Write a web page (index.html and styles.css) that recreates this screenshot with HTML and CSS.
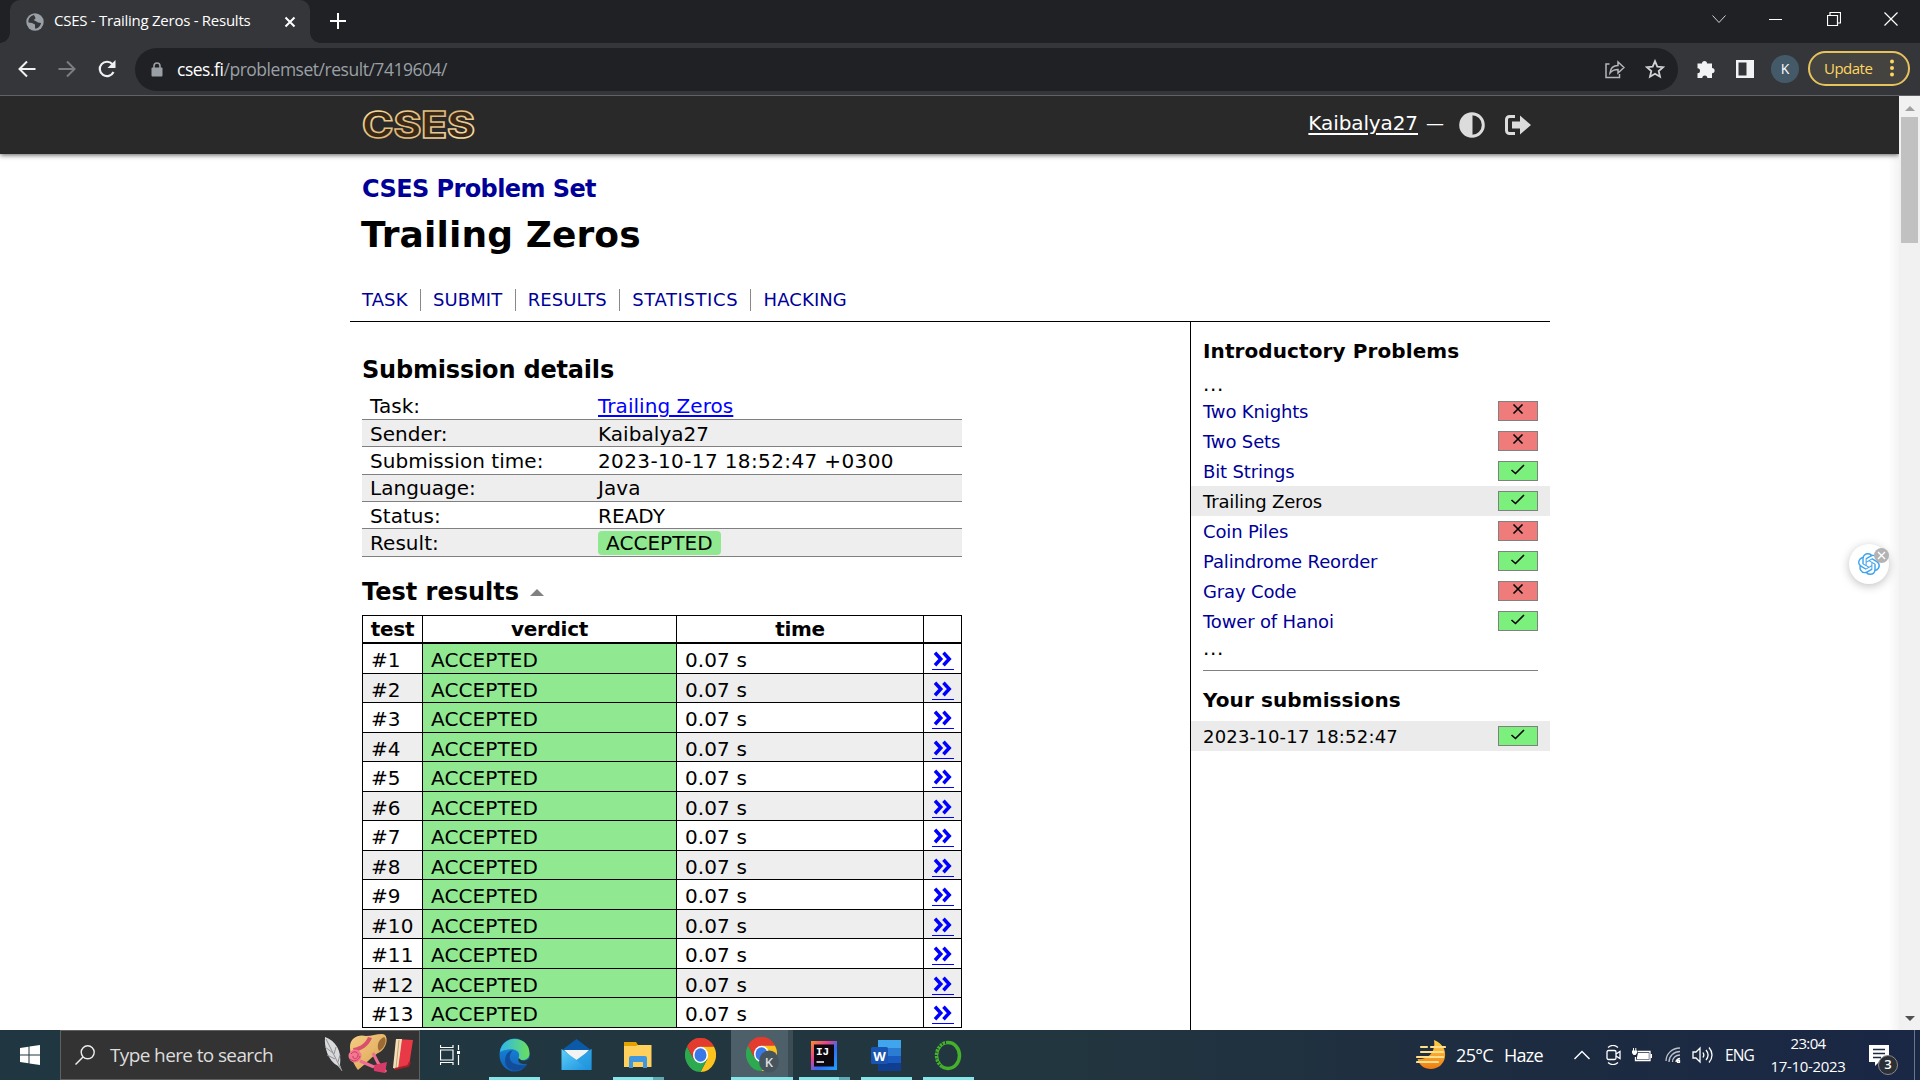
FILE: index.html
```
<!DOCTYPE html>
<html lang="en">
<head>
<meta charset="utf-8">
<title>CSES - Trailing Zeros - Results</title>
<link rel="stylesheet" href="styles.css">
</head>
<body>
<svg class="defs" width="0" height="0" aria-hidden="true">
  <defs>
    <linearGradient id="gold" x1="0" y1="0" x2="1" y2="1"><stop offset="0" stop-color="#ffe7a8"/><stop offset=".5" stop-color="#dcb878"/><stop offset="1" stop-color="#ffedc0"/></linearGradient>
    <linearGradient id="edgeA" x1="0" y1="0" x2="1" y2="0"><stop offset="0" stop-color="#2db5f0"/><stop offset="1" stop-color="#6be05a"/></linearGradient>
    <linearGradient id="edgeB" x1="0" y1="0" x2="0" y2="1"><stop offset="0" stop-color="#1a8ee0"/><stop offset="1" stop-color="#1160b8"/></linearGradient>
    <linearGradient id="mailA" x1="0" y1="0" x2="1" y2="1"><stop offset="0" stop-color="#5ed1fb"/><stop offset="1" stop-color="#1b8fdc"/></linearGradient>
    <linearGradient id="straw" x1="0" y1="0" x2="1" y2="1"><stop offset="0" stop-color="#f6cf86"/><stop offset="1" stop-color="#d9a050"/></linearGradient>
    <linearGradient id="ij" x1="0" y1="0" x2="1" y2="1"><stop offset="0" stop-color="#ff8a2a"/><stop offset=".35" stop-color="#e8408f"/><stop offset=".6" stop-color="#2f6df6"/><stop offset="1" stop-color="#1fa2ff"/></linearGradient>
    <linearGradient id="haze" x1="0" y1="0" x2="0" y2="1"><stop offset="0" stop-color="#ffd24a"/><stop offset="1" stop-color="#f07a13"/></linearGradient>
    <symbol id="more" viewBox="0 0 22 18"><path d="M2 2 8.500 9 2 16M11.500 2l6.500 7-6.500 7" fill="none" stroke="#00f" stroke-width="3.900"/></symbol>
    <symbol id="yes" viewBox="0 0 16 14"><path d="M1.500 8 5.500 11.500 14 3" fill="none" stroke="#000" stroke-width="1.600"/></symbol>
    <symbol id="no" viewBox="0 0 16 14"><path d="M3.500 2.500l9 9M12.500 2.500l-9 9" fill="none" stroke="#000" stroke-width="1.600"/></symbol>
    <symbol id="chrome" viewBox="0 0 32 34" preserveAspectRatio="none">
      <path d="M16 17 2.140 8.500A16 17 0 0 1 29.860 8.500L16 8.500Z" fill="#e33b2e"/>
      <path d="M16 8.500H29.860A16 17 0 0 1 16 34L23 21Z" fill="#fcc31e"/>
      <path d="M2.140 8.500A16 17 0 0 0 16 34L23 21 16 17 9 21Z" fill="#2da94f"/>
      <path d="M2.140 8.500 9 21l7-4V8.500H29.860A16 17 0 0 0 2.140 8.500Z" fill="#e33b2e"/>
      <ellipse cx="16" cy="17" rx="7.800" ry="8.300" fill="#fff"/><ellipse cx="16" cy="17" rx="6.200" ry="6.700" fill="#3b78e7"/>
    </symbol>
  </defs>
</svg>

<div class="tabstrip">
  <div class="tab">
    <svg class="favicon" width="18" height="18" viewBox="0 0 18 18"><circle cx="9" cy="9" r="8.700" fill="#9aa0a6"/><path d="M8 2C4 3 2 6 2.500 9.500L6 10l3 1.500v4c2 .5 5.500-2 6-5.500L12 9.500 9.500 8 7.500 7 10 5.500 9 4Z" fill="#35363a"/><path d="M10 3.500 14 5l-2 3-3-1.500Z" fill="#9aa0a6"/></svg>
    <span class="tab-title">CSES - Trailing Zeros - Results</span>
    <svg width="12" height="12" viewBox="0 0 12 12"><path d="M1.500 1.500l9 9M10.500 1.500l-9 9" stroke="#fff" stroke-width="2"/></svg>
  </div>
  <svg class="newtab" width="16" height="16" viewBox="0 0 16 16"><path d="M8 0v16M0 8h16" stroke="#fff" stroke-width="2"/></svg>
  <div class="winbtns">
    <svg width="14" height="14" viewBox="0 0 14 14"><path d="M.5 3.500 7 10.500l6.500-7" fill="none" stroke="#d5d5d5"/></svg>
    <svg width="14" height="14" viewBox="0 0 14 14"><path d="M0 7.500h13" stroke="#fff"/></svg>
    <svg width="14" height="14" viewBox="0 0 14 14"><path d="M.5 3.500h10v10H.5zM3 3V.5h10.500V11H11" fill="none" stroke="#fff" stroke-width="1.200"/></svg>
    <svg width="14" height="14" viewBox="0 0 14 14"><path d="M.5.5l13 13M13.500.5l-13 13" stroke="#fff" stroke-width="1.200"/></svg>
  </div>
</div>

<div class="toolbar">
  <svg class="nav-btn" width="18" height="18" viewBox="0 0 18 18"><path d="M17.500 9H2M9 1.500 1.500 9 9 16.500" fill="none" stroke="#f1f1f1" stroke-width="2"/></svg>
  <svg class="nav-btn" width="18" height="18" viewBox="0 0 18 18"><path d="M.5 9H16M9 1.500 16.500 9 9 16.500" fill="none" stroke="#7c7d80" stroke-width="2"/></svg>
  <svg class="nav-btn" width="18" height="18" viewBox="0 0 18 18"><path d="M15.500 12A7.200 7.200 0 1 1 14.500 4.300" fill="none" stroke="#f1f1f1" stroke-width="2.200"/><path d="M17.500 0v8h-8Z" fill="#f1f1f1"/></svg>
  <div class="omnibox">
    <svg width="12" height="15" viewBox="0 0 12 15"><path d="M3 6V4a3 3 0 0 1 6 0v2" fill="none" stroke="#9aa0a6" stroke-width="1.600"/><rect x=".5" y="5.500" width="11" height="9" rx="1" fill="#9aa0a6"/></svg>
    <span class="url"><b>cses.fi</b>/problemset/result/7419604/</span>
    <svg class="share" width="20" height="20" viewBox="0 0 20 20"><path d="M4.500 5H1v13.500h13.500V15M5 14c.5-5 3.500-7.500 8-7.500V3l6 5.500-6 5.500v-3.500c-4 0-6 1-8 3.500Z" fill="none" stroke="#b4b6b9" stroke-width="1.500"/></svg>
    <svg width="20" height="20" viewBox="0 0 20 20"><path d="M10 2.200l2.300 5.500 5.700.5-4.300 3.800 1.300 5.700-5-3-5 3L6.300 12 2 8.200l5.700-.5Z" fill="none" stroke="#d0d2d5" stroke-width="1.800"/></svg>
  </div>
  <svg class="puzzle" width="20" height="20" viewBox="0 0 20 20"><path d="M1.500 4.500H6a2.500 2.500 0 1 1 5 0h5V9a2.600 2.600 0 1 1 0 5.200V19h-4.700a2.500 2.500 0 0 0-5 0H1.500v-4.700a2.500 2.500 0 0 0 0-5V4.500Z" fill="#f1f3f4"/></svg>
  <svg class="panel" width="18" height="18" viewBox="0 0 18 18"><path d="M0 0h18v18H0zM2.500 2.500v13h8v-13z" fill="#f1f3f4" fill-rule="evenodd"/></svg>
  <div class="avatar">K</div>
  <div class="update"><span>Update</span><svg width="4" height="18" viewBox="0 0 4 18"><circle cx="2" cy="2.500" r="2" fill="#fdd663"/><circle cx="2" cy="9" r="2" fill="#fdd663"/><circle cx="2" cy="15.500" r="2" fill="#fdd663"/></svg></div>
</div>

<div class="viewport">
  <div class="page">
    <header class="header">
      <div class="header-inner">
        <svg class="logo" width="117" height="44" viewBox="0 -5 117 44"><text x="2" y="30" textLength="113" lengthAdjust="spacingAndGlyphs" class="logo-text">CSES</text></svg>
        <div class="controls">
          <a class="account">Kaibalya27</a><span class="dash">—</span>
          <svg class="contrast" width="26" height="26" viewBox="0 0 26 26"><circle cx="13" cy="13" r="11.300" fill="none" stroke="#dcdcdc" stroke-width="3"/><path d="M13.500 1.500a11.500 11.500 0 0 0 0 23Z" fill="#dcdcdc"/></svg>
          <svg class="logout" width="26" height="20" viewBox="0 0 26 20"><path d="M10 1.500H4.500a3 3 0 0 0-3 3v11a3 3 0 0 0 3 3H10" fill="none" stroke="#dcdcdc" stroke-width="3"/><path d="M7 6.500h8V.5L26 10 15 19.500v-6H7Z" fill="#dcdcdc"/></svg>
        </div>
      </div>
    </header>
    <div class="content">
      <div class="title-block">
        <div class="set-title">CSES Problem Set</div>
        <h1>Trailing Zeros</h1>
        <nav class="nav"><a>TASK</a><a>SUBMIT</a><a>RESULTS</a><a class="stat">STATISTICS</a><a>HACKING</a></nav>
      </div>
      <div class="columns">
        <main class="main">
          <h2 class="details-title">Submission details</h2>
          <div class="details">
            <div class="drow"><span>Task:</span><a class="link">Trailing Zeros</a></div>
            <div class="drow"><span>Sender:</span><span>Kaibalya27</span></div>
            <div class="drow"><span>Submission time:</span><span class="stamp">2023-10-17 18:52:47 +0300</span></div>
            <div class="drow"><span>Language:</span><span>Java</span></div>
            <div class="drow"><span>Status:</span><span>READY</span></div>
            <div class="drow"><span>Result:</span><span class="badge">ACCEPTED</span></div>
          </div>
          <h2 class="results-title">Test results <i class="caret"></i></h2>
          <div class="results">
            <div class="rrow rhead"><b>test</b><b>verdict</b><b>time</b><b></b></div>
            <div class="rrow"><span>#1</span><span class="ok">ACCEPTED</span><span>0.07 s</span><a><svg><use href="#more"/></svg></a></div>
            <div class="rrow"><span>#2</span><span class="ok">ACCEPTED</span><span>0.07 s</span><a><svg><use href="#more"/></svg></a></div>
            <div class="rrow"><span>#3</span><span class="ok">ACCEPTED</span><span>0.07 s</span><a><svg><use href="#more"/></svg></a></div>
            <div class="rrow"><span>#4</span><span class="ok">ACCEPTED</span><span>0.07 s</span><a><svg><use href="#more"/></svg></a></div>
            <div class="rrow"><span>#5</span><span class="ok">ACCEPTED</span><span>0.07 s</span><a><svg><use href="#more"/></svg></a></div>
            <div class="rrow"><span>#6</span><span class="ok">ACCEPTED</span><span>0.07 s</span><a><svg><use href="#more"/></svg></a></div>
            <div class="rrow"><span>#7</span><span class="ok">ACCEPTED</span><span>0.07 s</span><a><svg><use href="#more"/></svg></a></div>
            <div class="rrow"><span>#8</span><span class="ok">ACCEPTED</span><span>0.07 s</span><a><svg><use href="#more"/></svg></a></div>
            <div class="rrow"><span>#9</span><span class="ok">ACCEPTED</span><span>0.07 s</span><a><svg><use href="#more"/></svg></a></div>
            <div class="rrow"><span>#10</span><span class="ok">ACCEPTED</span><span>0.07 s</span><a><svg><use href="#more"/></svg></a></div>
            <div class="rrow"><span>#11</span><span class="ok">ACCEPTED</span><span>0.07 s</span><a><svg><use href="#more"/></svg></a></div>
            <div class="rrow"><span>#12</span><span class="ok">ACCEPTED</span><span>0.07 s</span><a><svg><use href="#more"/></svg></a></div>
            <div class="rrow"><span>#13</span><span class="ok">ACCEPTED</span><span>0.07 s</span><a><svg><use href="#more"/></svg></a></div>
          </div>
        </main>
        <aside class="side">
          <h4>Introductory Problems</h4>
          <div class="dots">...</div>
          <div class="srow"><a>Two Knights</a><i class="mark bad"><svg><use href="#no"/></svg></i></div>
          <div class="srow"><a>Two Sets</a><i class="mark bad"><svg><use href="#no"/></svg></i></div>
          <div class="srow"><a>Bit Strings</a><i class="mark"><svg><use href="#yes"/></svg></i></div>
          <div class="srow current"><a>Trailing Zeros</a><i class="mark"><svg><use href="#yes"/></svg></i></div>
          <div class="srow"><a>Coin Piles</a><i class="mark bad"><svg><use href="#no"/></svg></i></div>
          <div class="srow"><a>Palindrome Reorder</a><i class="mark"><svg><use href="#yes"/></svg></i></div>
          <div class="srow"><a>Gray Code</a><i class="mark bad"><svg><use href="#no"/></svg></i></div>
          <div class="srow"><a>Tower of Hanoi</a><i class="mark"><svg><use href="#yes"/></svg></i></div>
          <div class="dots end">...</div>
          <hr>
          <h4 class="subs">Your submissions</h4>
          <div class="srow current"><a class="when">2023-10-17 18:52:47</a><i class="mark"><svg><use href="#yes"/></svg></i></div>
        </aside>
      </div>
    </div>
    <div class="assistant">
      <svg width="22" height="22" viewBox="0 0 24 24"><path fill="#3fa4ee" d="M22.2819 9.8211a5.9847 5.9847 0 0 0-.5157-4.9108 6.0462 6.0462 0 0 0-6.5098-2.9A6.0651 6.0651 0 0 0 4.9807 4.1818a5.9847 5.9847 0 0 0-3.9977 2.9 6.0462 6.0462 0 0 0 .7427 7.0966 5.98 5.98 0 0 0 .511 4.9107 6.051 6.051 0 0 0 6.5146 2.9001A5.9847 5.9847 0 0 0 13.2599 24a6.0557 6.0557 0 0 0 5.7718-4.2058 5.9894 5.9894 0 0 0 3.9977-2.9001 6.0557 6.0557 0 0 0-.7475-7.0729zm-9.022 12.6081a4.4755 4.4755 0 0 1-2.8764-1.0408l.1419-.0804 4.7783-2.7582a.7948.7948 0 0 0 .3927-.6813v-6.7369l2.02 1.1686a.071.071 0 0 1 .038.052v5.5826a4.504 4.504 0 0 1-4.4945 4.4944zm-9.6607-4.1254a4.4708 4.4708 0 0 1-.5346-3.0137l.142.0852 4.783 2.7582a.7712.7712 0 0 0 .7806 0l5.8428-3.3685v2.3324a.0804.0804 0 0 1-.0332.0615L9.74 19.9502a4.4992 4.4992 0 0 1-6.1408-1.6464zM2.3408 7.8956a4.485 4.485 0 0 1 2.3655-1.9728V11.6a.7664.7664 0 0 0 .3879.6765l5.8144 3.3543-2.0201 1.1685a.0757.0757 0 0 1-.071 0l-4.8303-2.7865A4.504 4.504 0 0 1 2.3408 7.872zm16.5963 3.8558L13.1038 8.364 15.1192 7.2a.0757.0757 0 0 1 .071 0l4.8303 2.7913a4.4944 4.4944 0 0 1-.6765 8.1042v-5.6772a.79.79 0 0 0-.407-.667zm2.0107-3.0231l-.142-.0852-4.7735-2.7818a.7759.7759 0 0 0-.7854 0L9.409 9.2297V6.8974a.0662.0662 0 0 1 .0284-.0615l4.8303-2.7866a4.4992 4.4992 0 0 1 6.6802 4.66zM8.3065 12.863l-2.02-1.1638a.0804.0804 0 0 1-.038-.0567V6.0742a4.4992 4.4992 0 0 1 7.3757-3.4537l-.142.0805L8.704 5.459a.7948.7948 0 0 0-.3927.6813zm1.0976-2.3654l2.602-1.4998 2.6069 1.4998v2.9994l-2.5974 1.4997-2.6067-1.4997Z"/></svg>
      <span class="dismiss"><svg width="9" height="9" viewBox="0 0 9 9"><path d="M1 1l7 7M8 1 1 8" stroke="#fff" stroke-width="1.400"/></svg></span>
    </div>
  </div>
  <div class="scrollbar"><i class="up"></i><i class="thumb"></i><i class="down"></i></div>
</div>

<div class="taskbar">
  <div class="start"><svg width="20" height="20" viewBox="0 0 20 20"><path d="M0 3l8.500-1.200v7.700H0zM9.500 1.500 20 0v9.500H9.500zM0 10.500h8.500v7.700L0 17zM9.500 10.500H20V20L9.500 18.500z" fill="#fff"/></svg></div>
  <div class="search">
    <svg width="20" height="20" viewBox="0 0 20 20"><circle cx="12.700" cy="7.300" r="6.500" fill="none" stroke="#eee" stroke-width="1.400"/><path d="M8 12 .5 19.500" stroke="#eee" stroke-width="1.500"/></svg>
    <span>Type here to search</span>
    <svg class="art" width="92" height="44" viewBox="0 0 92 44">
      <path d="M3 4C14 8 20 18 18 32L20 38 16 33C6 28 2 14 3 4Z" fill="#d9dadc"/><path d="M4 6 20 38M3 14l8 6M5 22l8 4M14 14l-2 7M18 22l-2 7" stroke="#8d9094" fill="none"/>
      <path d="M28 14C28 5 36 1 44 3C50 3 54 1 60 1c7 0 6 13-2 18-8 4-12 10-22 18-3-4-8-12-8-23Z" fill="url(#straw)"/><path d="M62 4c-5 2-8 8-5 14 7-4 8-12 5-14Z" fill="#9b6a35"/>
      <path d="M31 15C39 14 44 9 46 4l4 1C47 13 39 18 32 19Z" fill="#d9506e"/>
      <path d="M51 20l5 10 8 9" fill="none" stroke="#ee6f91" stroke-width="3"/><path d="M52 32l13-3-2 11-11-2Z" fill="#d63a66"/><path d="M38 28l14 6" stroke="#ee6f91" stroke-width="3"/>
      <circle cx="33" cy="23" r="6.500" fill="#f47690"/><path d="M29 21c3-4 8-2 7 2s-6 3-5 0M28 26c4 4 9 1 10-3" fill="none" stroke="#c93a5c"/>
      <path d="M74 6 91 7 87 33 72 36Z" fill="#ea3946"/><path d="M74 6h6l-4 30-5-1Z" fill="#f4dfb9"/><path d="M77 7 74 35" stroke="#c4a272"/><path d="M73 36l13-3 2-4" fill="none" stroke="#a91e2a" stroke-width="2"/>
    </svg>
  </div>
  <div class="apps">
    <div class="app view"><svg width="20" height="20" viewBox="0 0 20 20"><path d="M.5 5h12.500v10H.5zM.5 0v2.500H13V0M.5 20v-2.500H13V20M18.500 0v5M18.500 10v10" fill="none" stroke="#fff" stroke-width="1.200"/><path d="M17 6h3v3h-3z" fill="#fff"/></svg></div>
    <div class="app open"><svg width="31" height="34" viewBox="0 0 31 34"><ellipse cx="15.500" cy="17" rx="15" ry="16.500" fill="url(#edgeB)"/><path d="M1 14C3-4 31-3 30.500 16c0 6-9 8-11 4 3-7-5-12-18.500-6Z" fill="url(#edgeA)"/><path d="M14 12c-7 8-3 17 14 15-9 10-22 5-22-4 0-6 3-10 8-11Z" fill="#124d9c"/><path d="M20 20c2 4 8 3 10.500 0v4l-2 2c-6 1-11-2-8.500-6Z" fill="#223842"/></svg></div>
    <div class="app"><svg width="31" height="34" viewBox="0 0 31 34"><path d="M1 12 15.500 1 30 12v10H1Z" fill="#0a5aa8"/><path d="M3 12h25l-12 13Z" fill="#f3f3f3"/><path d="M.5 11 15.500 22 30.500 11v21H.5Z" fill="url(#mailA)"/><path d="M30.500 11v21H28L11 19l4.500 3Z" fill="#2297df" opacity=".55"/></svg></div>
    <div class="app open multi"><svg width="28" height="28" viewBox="0 0 28 28"><path d="M0 1h12l2 3h13v9H0Z" fill="#e6a100"/><path d="M0 5h12l2-1h13.500v22H0Z" fill="#ffd15c"/><path d="M5 27V17a2 2 0 0 1 2-2h14a2 2 0 0 1 2 2v10h-4v-6h-10v6Z" fill="#3f97df"/></svg></div>
    <div class="app"><svg width="31" height="34"><use href="#chrome" width="31" height="34"/></svg></div>
    <div class="app open active"><svg width="33" height="36"><use href="#chrome" width="31" height="34"/><ellipse cx="23" cy="24.500" rx="10" ry="11" fill="#46555d"/><text x="23" y="29.500" class="k">K</text></svg></div>
    <div class="app open multi"><svg width="26" height="29" viewBox="0 0 26 29"><path d="M0 0h26v29H0z" fill="url(#ij)"/><path d="M3 3.500h20v22H3z" fill="#0d0710"/><text x="5" y="14" class="ij">IJ</text><path d="M5.500 21h7.500" stroke="#fff" stroke-width="1.500"/></svg></div>
    <div class="app open"><svg width="30" height="31" viewBox="0 0 30 31"><path d="M7 0h23v8H7z" fill="#41a5ee"/><path d="M7 8h23v8H7z" fill="#2b7cd3"/><path d="M7 16h23v7H7z" fill="#185abd"/><path d="M7 23h23v8H7z" fill="#103f91"/><rect y="7" width="17" height="17" rx="1.500" fill="#1855b3"/><text x="8.500" y="20.500" class="w">W</text></svg></div>
    <div class="app open"><svg width="28" height="31" viewBox="0 0 28 31"><ellipse cx="14" cy="15.500" rx="11.500" ry="13" fill="none" stroke="#45b02a" stroke-width="3.500"/><path d="M12 2.500A11.500 13 0 0 0 8 27" fill="none" stroke="#203640" stroke-width="3" stroke-dasharray="1 2.500"/></svg></div>
  </div>
  <div class="tray">
    <svg class="weather" width="30" height="30" viewBox="0 0 30 30"><path d="M18 0c9 4 12 10 11 17-1 7-7 12-14 12S3 25 1.500 19C12 20 20 12 18 0Z" fill="url(#haze)"/><path d="M5 7h6M15 7h14M5 12h22M1 17h26M1 22h21" stroke="#ffe08a" stroke-width="2.200" stroke-linecap="round"/></svg>
    <span class="temp">25°C</span><span class="cond">Haze</span>
    <svg class="chev" width="16" height="10" viewBox="0 0 16 10"><path d="M.5 9 8 1.500 15.500 9" fill="none" stroke="#fff" stroke-width="1.400"/></svg>
    <svg class="meet" width="15" height="20" viewBox="0 0 15 20" fill="none" stroke="#fff" stroke-width="1.300"><rect x="1" y="5.500" width="9" height="9" rx="1.500"/><path d="M10 9l4-2.500v7L10 11M2 2.500c3-2.500 7-2.500 10 0M2 17.500c3 2.500 7 2.500 10 0"/></svg>
    <svg class="batt" width="20" height="15" viewBox="0 0 20 15"><path d="M5.500 3.500H18v9H3.500V9" fill="none" stroke="#fff" stroke-width="1.300"/><path d="M6 5h10.800v6.200H5V9ZM18.500 6H20v4h-1.500zM0 2.500h5V5L3.500 7h-2L0 5zM1 0h1v3H1zM3.300 0h1v3h-1z" fill="#fff"/></svg>
    <svg class="wifi" width="16" height="16" viewBox="0 0 16 16" fill="none" stroke="#b9c1cc" stroke-width="1.300"><path d="M1 14C1 7 7 1 15 1M4 15C4 9 9 4.500 15 4.500M7.500 15c0-4 3-7 7.500-7"/><path d="M11 15c0-2 2-3.500 4-3.500M12.500 13.500h2v2h-2z" stroke="#fff"/></svg>
    <svg class="vol" width="21" height="18" viewBox="0 0 21 18" fill="none" stroke="#fff" stroke-width="1.300"><path d="M1 6h3l4-4v14l-4-4H1zM11 6.500c1 1.500 1 3.500 0 5M14 4c2.500 3 2.500 7 0 10M17 1.500c4 4.500 4 10.500 0 15"/></svg>
    <span class="lang">ENG</span>
    <div class="clock"><span class="hm">23:04</span><span>17-10-2023</span></div>
    <div class="notif"><svg width="20" height="21" viewBox="0 0 20 21"><path d="M0 0h20v17H10l-4 4v-4H0z" fill="#fff"/><path d="M4 4.500h12M4 8.500h12M4 12.500h8" stroke="#1d2b40" stroke-width="1.300"/></svg><span class="count">3</span></div>
    <div class="peek"></div>
  </div>
</div>
</body>
</html>
```
FILE: styles.css
```
* { box-sizing: border-box; }
html, body { margin: 0; height: 100%; overflow: hidden; }
body { display: flex; flex-direction: column; width: 1920px; height: 1080px; background: #fff; font-family: "Open Sans", "Noto Sans", sans-serif; }
svg { display: block; flex: none; }
.defs { position: absolute; }

/* browser chrome */
.tabstrip { display: flex; align-items: center; height: 43px; background: #202124; flex: none; padding-left: 10px; }
.tab { display: flex; align-items: center; width: 300px; height: 43px; padding: 0 14px 0 16px; background: #35363a; border-radius: 10px 10px 0 0; position: relative; }
.tab::before, .tab::after { content: ""; position: absolute; bottom: 0; width: 10px; height: 10px; }
.tab::before { left: -10px; background: radial-gradient(circle at 0 0, transparent 9.500px, #35363a 10px); }
.tab::after { right: -10px; background: radial-gradient(circle at 100% 0, transparent 9.500px, #35363a 10px); }
.tab-title { flex: 1; margin: -3px 0 0 10px; font-size: 15px; letter-spacing: -0.260px; color: #fff; white-space: nowrap; }
.newtab { margin: -1px 0 0 20px; }
.winbtns { display: flex; gap: 43.500px; margin: -6px 22px 0 auto; }
.toolbar { display: flex; align-items: center; height: 53px; background: #35363a; border-bottom: 1px solid #616267; flex: none; padding-left: 18px; }
.nav-btn { margin-right: 22px; }
.nav-btn:nth-child(3) { margin-right: 19px; }
.omnibox { display: flex; align-items: center; width: 1543px; height: 43px; padding: 0 13px 0 16px; border-radius: 22px; background: #202124; }
.url { flex: 1; margin-left: 14px; font-size: 17.500px; letter-spacing: -0.475px; color: #9aa0a6; }
.url b { font-weight: 400; color: #fff; }
.share { margin-right: 20px; }
.puzzle { margin-left: 18px; }
.panel { margin-left: 20px; }
.avatar { width: 28px; height: 34px; margin-left: 17px; border-radius: 50%; width: 28px; height: 28px; background: #455a68; color: #fff; font-size: 14px; line-height: 27px; text-align: center; }
.update { display: flex; align-items: center; justify-content: space-between; width: 102px; height: 35px; margin: -2px 0 0 9px; padding: 0 14px; border: 2px solid #e6c35c; border-radius: 18px; background: #45433f; color: #fdd663; font-size: 15px; letter-spacing: -0.500px; }

/* page */
.viewport { display: flex; height: 934px; flex: none; overflow: hidden; font-family: "DejaVu Sans", Verdana, sans-serif; }
.page { width: 1899px; position: relative; overflow: hidden; background: linear-gradient(90deg, #fff 1888px, #f4f4f4); }
.header { height: 58px; background: #292929; box-shadow: 0 1px 5px rgba(0, 0, 0, .65); }
.header-inner { display: flex; align-items: center; justify-content: space-between; width: 1200px; height: 58px; margin-left: 350px; padding: 0 19px 0 10px; }
.logo-text { font: 800 37px "Inter", sans-serif; fill: #3a2817; stroke: url(#gold); stroke-width: 1.500px; }
.controls { display: flex; align-items: center; font-size: 20px; color: #fff; }
.account { text-decoration: underline; letter-spacing: -0.1px; line-height: 24px; margin-top: -5px; text-underline-offset: 3px; text-decoration-thickness: 2px; }
.dash { font-size: 18px; line-height: 24px; margin: -4px 0 0 8px; }
.contrast { margin-left: 15px; }
.logout { margin-left: 20px; }
.content { width: 1200px; margin-left: 350px; }
.title-block { height: 168px; padding: 17px 12px 0; border-bottom: 1px solid #000; }
.set-title { font: bold 24px/36px "DejaVu Sans", sans-serif; letter-spacing: -0.586px; color: #009; }
h1 { margin: 3px 0 29px -1px; font-size: 36px; line-height: 50px; letter-spacing: .12px; }
.nav { display: flex; height: 22px; font-size: 18px; line-height: 22px; color: #009; }
.nav a { padding: 0 12.200px; border-left: 1px solid #888; letter-spacing: .1px; }
.nav a:first-child { padding-left: 0; border: 0; }
.nav .stat { letter-spacing: .603px; }
.columns { display: flex; height: 720px; }
.main { width: 840px; padding: 33px 12px 0; }
h2 { margin: 0; font-size: 24px; line-height: 30px; }
.details-title { letter-spacing: -0.188px; }
.details { width: 600px; margin-top: 7.500px; font-size: 20px; letter-spacing: .05px; }
.drow { display: grid; grid-template-columns: 228px auto; justify-content: start; align-items: center; height: 27.400px; padding: 1px 0 0 8px; border-bottom: 1px solid #808080; line-height: 24px; }
.drow:nth-child(even) { background: #eee; }
.link { color: #00f; text-decoration: underline; text-underline-offset: 2px; text-decoration-thickness: 2px; }
.stamp { letter-spacing: .380px; }
.badge { height: 24px; padding: 0 8px; border-radius: 4px; background: #90e990; }
.results-title { display: flex; align-items: center; margin-top: 20.100px; }
.caret { margin: 1px 0 0 11px; border: 7px solid transparent; border-top: 0; border-bottom: 7px solid #808080; }
.results { width: 600px; margin-top: 8px; border: solid #000; border-width: 1px 1px 0; font-size: 20px; }
.rrow { display: grid; grid-template-columns: 60px 254px 247px 37px; height: 29.500px; border-bottom: 1px solid #000; letter-spacing: .1px; line-height: 24px; }
.rrow:nth-child(odd) { background: #eee; }
.rrow > * { padding: 4px 0 0 8px; border-right: 1px solid #000; }
.rrow > :last-child { border: 0; }
.rrow.rhead { height: 28.500px; background: #fff; border-bottom-width: 2px; text-align: center; letter-spacing: -0.290px; line-height: 26px; }
.rhead > * { padding: 0; }
.ok { background: #90e990; }
.rrow a { padding: 7px 0 0 8px; }
.rrow a svg { width: 22px; height: 19px; border-bottom: 1px solid #00f; padding-bottom: 2px; }
.side { width: 360px; border-left: 1px solid #000; font-size: 18px; }
h4 { margin: 15px 0 0 12px; font-size: 20px; line-height: 28px; letter-spacing: .1px; }
.dots { height: 31px; margin-left: 12px; font-size: 20px; line-height: 38px; letter-spacing: .7px; }
.srow { display: flex; align-items: center; justify-content: space-between; height: 30px; padding: 0 12px; letter-spacing: -.15px; color: #009; }
.current { background: #ebebeb; color: #000; }
.mark { display: flex; justify-content: center; align-items: flex-start; width: 40px; height: 20px; border: 1px solid #808080; background: #7cf07c; }
.bad { background: #f07b7b; }
.mark svg { width: 16px; height: 14px; }
.srow .when { letter-spacing: .2px; }
.dots.end { height: 34px; line-height: 25px; }
hr { margin: 0 12px; border: 0; border-top: 1px solid #808080; }
h4.subs { margin: 15px 0 7px 12px; }
.assistant { position: absolute; left: 1849px; top: 448px; width: 40px; height: 40px; display: grid; place-items: center; border-radius: 50%; background: #fff; box-shadow: 0 2px 10px rgba(0, 0, 0, .25); }
.dismiss { position: absolute; right: 0; top: 4px; width: 15px; height: 15px; display: grid; place-items: center; border-radius: 50%; background: #b3b3b3; }
.scrollbar { display: flex; flex-direction: column; align-items: center; width: 21px; background: #f1f1f1; }
.up { margin-top: 10px; border: 5px solid transparent; border-top: 0; border-bottom-color: #a0a0a0; }
.thumb { width: 17px; height: 126px; margin-top: 6px; background: #c1c1c1; }
.down { margin: auto 0 9px; border: 5px solid transparent; border-bottom: 0; border-top-color: #505050; }

/* taskbar */
.taskbar { display: flex; height: 50px; flex: none; background: linear-gradient(90deg, #203741 0%, #22363f 55%, #1d2b40 80%, #1a2745 100%); color: #fff; }
.start { display: grid; place-items: center; width: 60px; }
.search { display: flex; align-items: center; width: 360px; padding-left: 14px; border: 1px solid #606060; background: #333; font-size: 19px; letter-spacing: -0.623px; color: #ddd; }
.search span { margin-left: 15px; white-space: nowrap; }
.art { margin: 0 5px 0 auto; }
.apps { display: flex; }
.app { display: flex; align-items: center; justify-content: center; width: 62px; height: 50px; position: relative; }
.app.view { width: 63px; padding-right: 3px; }
.app.open::after { content: ""; position: absolute; left: 6px; right: 5px; bottom: 0; height: 3px; background: #85e5e8; }
.app.multi::after { background: linear-gradient(90deg, #85e5e8 40px, #5fa9b0 40px); }
.app.active { background: linear-gradient(90deg, #4d5f68 57px, #3b4c55 57px); }
.app.active::after { left: 0; right: 0; }
.k { font: 600 13px "Open Sans", sans-serif; fill: #ddd; text-anchor: middle; }
.ij { font: bold 11px "Liberation Mono", monospace; fill: #fff; }
.w { font: bold 13px "Open Sans", sans-serif; fill: #fff; text-anchor: middle; }
.tray { display: flex; align-items: center; margin-left: auto; width: 504px; font-size: 18px; }
.temp { width: 37px; margin-left: 10px; letter-spacing: -.657px; white-space: nowrap; }
.cond { width: 39px; margin-left: 11px; letter-spacing: -.705px; white-space: nowrap; }
.chev { margin-left: 31px; }
.meet { margin-left: 16px; }
.batt { margin-left: 11px; }
.wifi { margin-left: 13px; }
.vol { margin-left: 11px; }
.lang { width: 28px; margin-left: 12px; font-size: 15.500px; letter-spacing: -.845px; }
.clock { display: flex; flex-direction: column; align-items: center; width: 80px; margin-left: 15px; font-size: 15px; line-height: 23px; letter-spacing: -.327px; }
.hm { letter-spacing: -.649px; }
.notif { position: relative; margin-left: 21px; }
.count { position: absolute; left: 9px; top: 10px; width: 20px; height: 20px; border: 1px solid #888; border-radius: 50%; background: #2b2f36; font-size: 13px; font-weight: 600; line-height: 17px; text-align: center; }
.peek { width: 1px; height: 50px; margin-left: 25px; background: #6b7588; }
```
